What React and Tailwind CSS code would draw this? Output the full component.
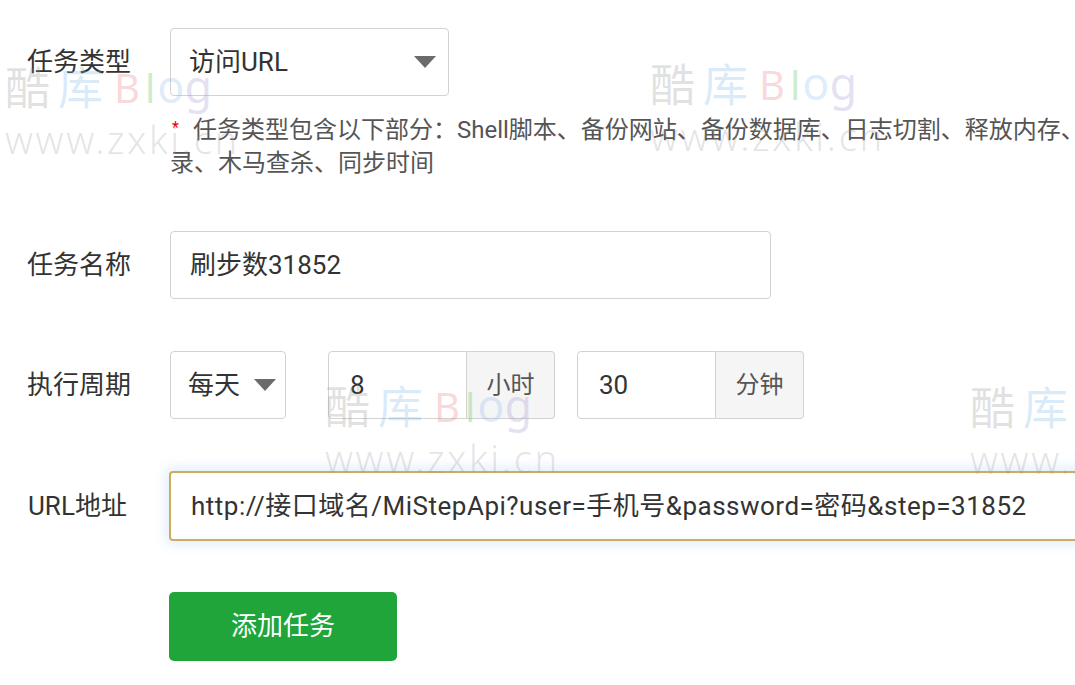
import React from "react";

const FONT = { fontFamily: 'Roboto, "Noto Sans CJK SC", "Noto Sans", sans-serif' };

function Caret() {
  return (
    <svg width="22" height="12" viewBox="0 0 22 12" className="shrink-0">
      <polygon points="0,0 22,0 11,12" fill="#6b6b6b" />
    </svg>
  );
}

function Watermark({ x, y }) {
  return (
    <div
      className="absolute pointer-events-none select-none"
      style={{ left: x, top: y }}
    >
      <div className="flex items-end h-[44px] leading-none whitespace-nowrap">
        <span className="text-[45px] text-[rgba(150,150,150,0.28)]" style={{ fontFamily: '"Noto Sans CJK SC", sans-serif' }}>酷</span>
        <span className="text-[45px] text-[rgba(120,185,235,0.28)] ml-[8px]" style={{ fontFamily: '"Noto Sans CJK SC", sans-serif' }}>库</span>
        <span className="text-[40px] text-[rgba(235,120,120,0.28)] ml-[11px]" style={{ fontFamily: '"Noto Sans", sans-serif' }}>B</span>
        <span className="text-[40px] text-[rgba(110,200,110,0.35)] ml-[5px]" style={{ fontFamily: '"Noto Sans", sans-serif' }}>l</span>
        <span className="text-[45px] text-[rgba(130,180,235,0.25)] ml-[2px]" style={{ fontFamily: '"Noto Sans", sans-serif' }}>o</span>
        <span className="text-[45px] text-[rgba(160,150,210,0.28)]" style={{ fontFamily: '"Noto Sans", sans-serif' }}>g</span>
      </div>
      <div
        className="text-[38px] leading-none mt-[12px] tracking-[2.6px] text-[rgba(150,150,150,0.25)] whitespace-nowrap font-light"
        style={{ fontFamily: '"Noto Sans", sans-serif' }}
      >
        www.zxki.cn
      </div>
    </div>
  );
}

function Label({ children }) {
  return (
    <div className="w-[170px] shrink-0 pl-[27px] text-[26px] text-[#333] leading-none">
      {children}
    </div>
  );
}

export default function App() {
  return (
    <div
      className="relative w-[1075px] h-[685px] overflow-hidden bg-white text-[#333]"
      style={FONT}
    >
      <div className="pt-[28px]">
        {/* Row 1: task type */}
        <div className="flex items-center">
          <Label>任务类型</Label>
          <div className="w-[279px] h-[68px] border border-[#d2d2d2] rounded-[4px] flex items-center justify-between pl-[18px] pr-[12px] text-[26px] text-[#333]">
            <span>访问URL</span>
            <Caret />
          </div>
        </div>

        {/* Help text */}
        <div className="pl-[170px] mt-[18px] text-[24px] text-[#555] leading-[33px] whitespace-nowrap">
          <div className="flex">
            <span className="inline-block text-[#e00] text-[16px] leading-none mt-[6px] pl-[2px] w-[23px] shrink-0">*</span>
            <span>任务类型包含以下部分：Shell脚本、备份网站、备份数据库、日志切割、释放内存、访问URL、备份目</span>
          </div>
          <div>录、木马查杀、同步时间</div>
        </div>

        {/* Row 2: task name */}
        <div className="flex items-center mt-[51px]">
          <Label>任务名称</Label>
          <div className="w-[601px] h-[68px] border border-[#d2d2d2] rounded-[4px] flex items-center pl-[19px] text-[26px] text-[#333]">
            刷步数31852
          </div>
        </div>

        {/* Row 3: cycle */}
        <div className="flex items-center mt-[52px]">
          <Label>执行周期</Label>
          <div className="w-[116px] h-[68px] border border-[#d2d2d2] rounded-[4px] flex items-center justify-between pl-[17px] pr-[9px] text-[26px] text-[#333]">
            <span>每天</span>
            <Caret />
          </div>
          <div className="ml-[42px] flex h-[68px]">
            <div className="w-[139px] border border-[#d2d2d2] rounded-l-[4px] flex items-center pl-[21px] text-[26px] text-[#333]">
              8
            </div>
            <div className="w-[88px] border border-l-0 border-[#d2d2d2] rounded-r-[4px] bg-[#f5f5f5] flex items-center justify-center text-[24px] text-[#555]">
              小时
            </div>
          </div>
          <div className="ml-[22px] flex h-[68px]">
            <div className="w-[139px] border border-[#d2d2d2] rounded-l-[4px] flex items-center pl-[21px] text-[26px] text-[#333]">
              30
            </div>
            <div className="w-[88px] border border-l-0 border-[#d2d2d2] rounded-r-[4px] bg-[#f5f5f5] flex items-center justify-center text-[24px] text-[#555]">
              分钟
            </div>
          </div>
        </div>

        {/* Row 4: URL */}
        <div className="flex items-center mt-[52px]">
          <div className="w-[169px] shrink-0 pl-[28px] text-[26px] text-[#333] leading-none">URL地址</div>
          <div className="w-[960px] shrink-0 h-[70px] border-2 border-[#cbad5e] rounded-[4px] shadow-[0_0_12px_4px_rgba(120,170,230,0.2)] flex items-center pl-[20px] text-[26px] tracking-[0.5px] text-[#333] whitespace-nowrap">
            http://接口域名/MiStepApi?user=手机号&amp;password=密码&amp;step=31852
          </div>
        </div>

        {/* Button */}
        <div className="pl-[169px] mt-[51px]">
          <button className="w-[228px] h-[69px] rounded-[5px] bg-[#20a53a] text-white text-[26px] flex items-center justify-center">
            添加任务
          </button>
        </div>
      </div>

      <Watermark x={5} y={64} />
      <Watermark x={650} y={61} />
      <Watermark x={325} y={383} />
      <Watermark x={970} y={384} />
    </div>
  );
}
